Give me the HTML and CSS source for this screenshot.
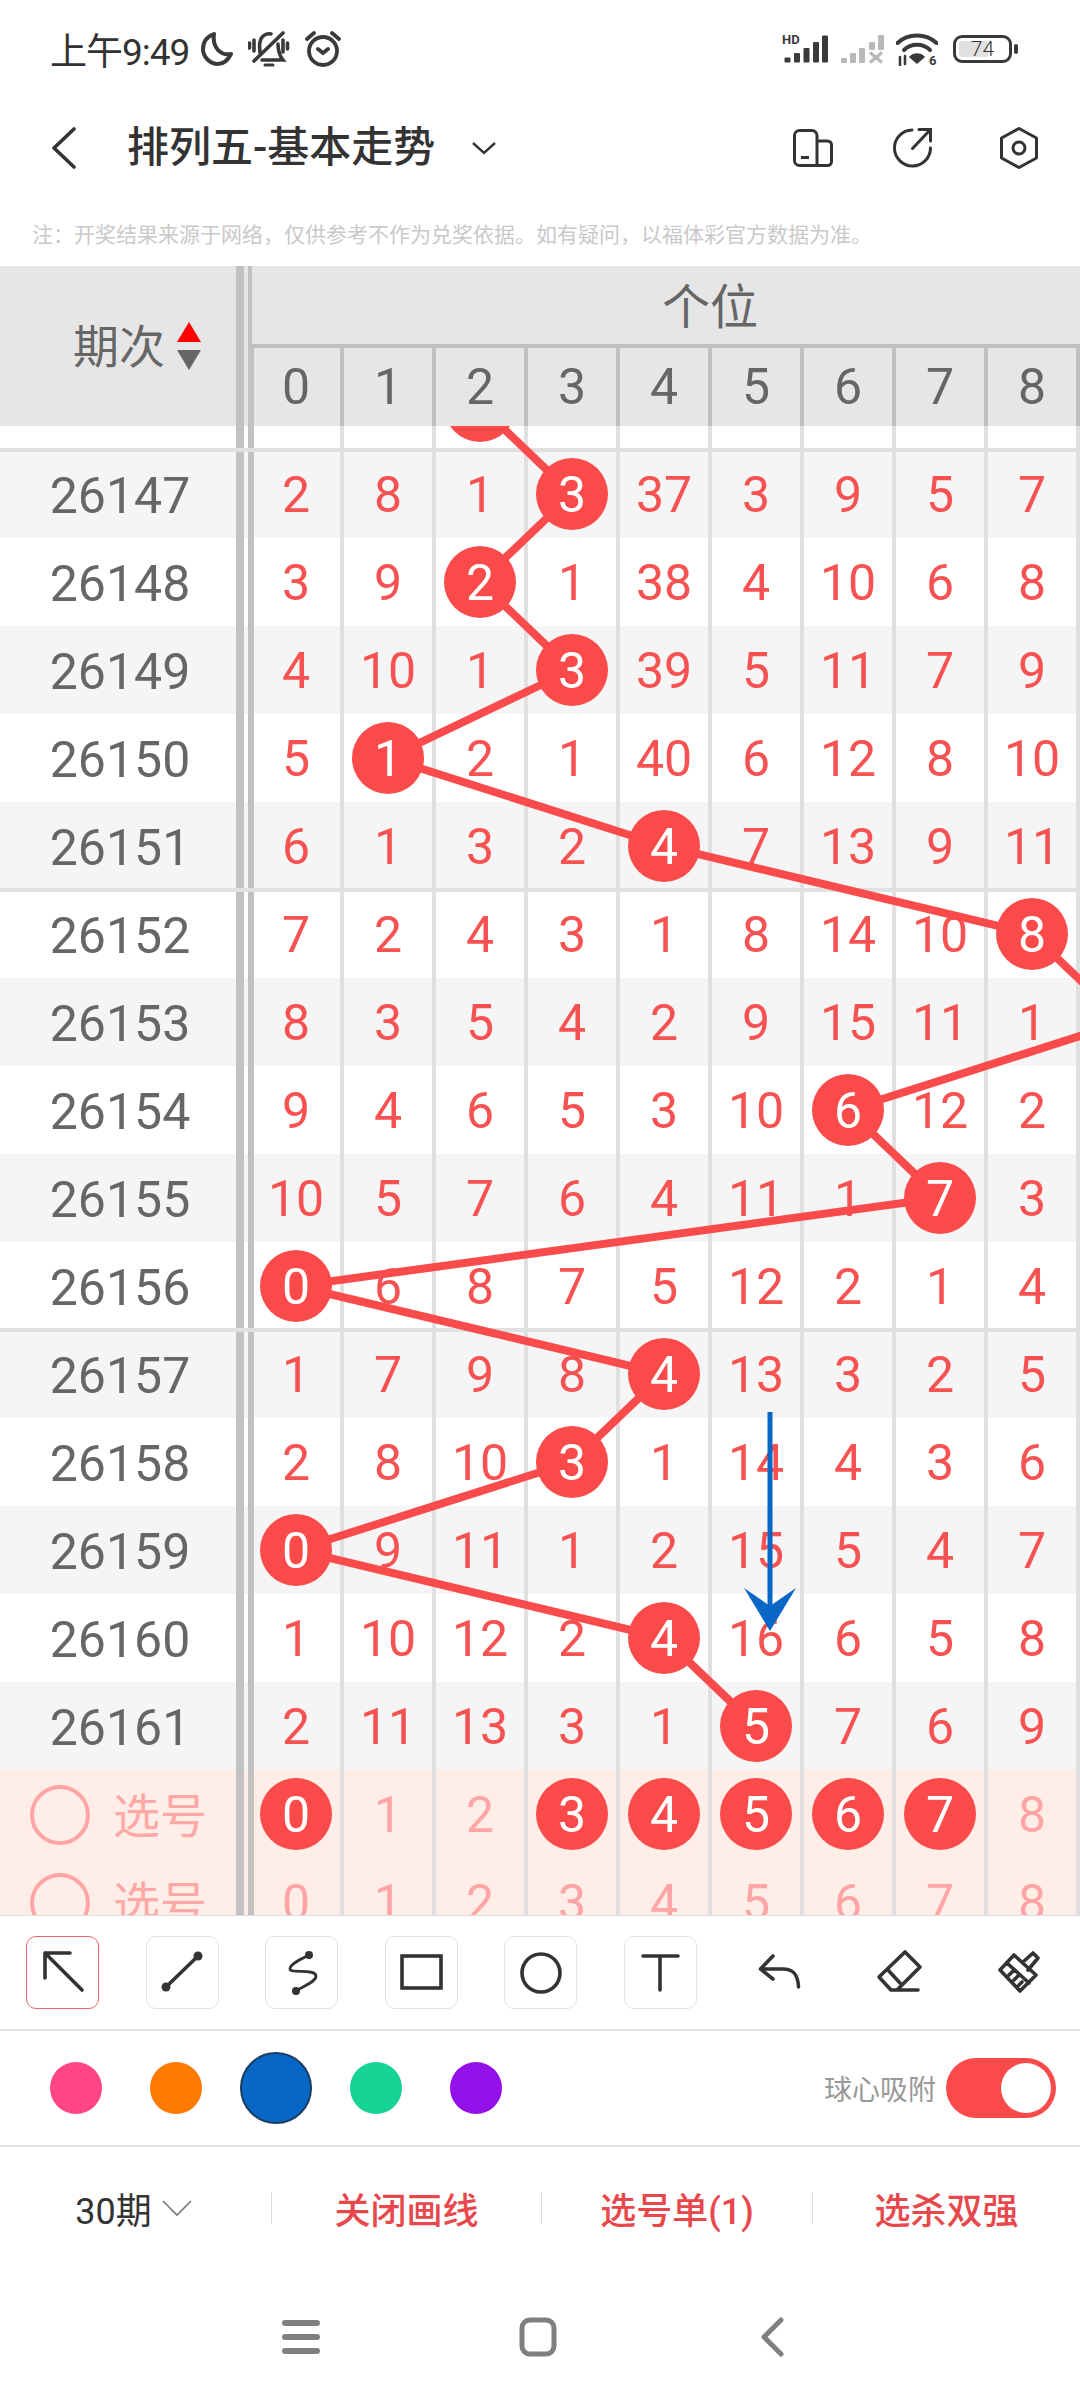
FILE: index.html
```html
<!DOCTYPE html>
<html lang="zh-CN">

<head>
    <meta charset="UTF-8">
    <meta name="viewport" content="width=device-width, initial-scale=1.0">
    <title>排列五-基本走势</title>
    <link rel="stylesheet" href="styles.css">
</head>

<body>
    <!-- 状态栏 -->
    <div class="status-bar">
        <div class="status-left">
            <span class="clock">上午9:49</span>
            <svg class="st-moon" width="32" height="34" viewBox="0 0 32 34"><path d="M13 2C5 5 2 11 2 17C2 25 9 32 17 32C23 32 27 28 30 22C20 24 11 16 13 2Z" fill="none" stroke="#3a3a3a" stroke-width="4" stroke-linejoin="round"/></svg>
            <svg class="st-bell" width="42" height="36" viewBox="0 0 42 36" fill="none" stroke="#3a3a3a" stroke-width="3.6" stroke-linecap="round"><path d="M12 22C12 18 11 14 12 11C13 5 18 2 23 3M30 13C30 19 31 24 35 29H14M6 30L35 2M1.5 12V17M6 9V20M35 9V21M39.5 12V18"/><path d="M17 34H25" stroke-width="3"/></svg>
            <svg class="st-alarm" width="38" height="36" viewBox="0 0 38 36" fill="none" stroke="#3a3a3a" stroke-width="3.8" stroke-linecap="round"><circle cx="18" cy="20" r="14"/><path d="M13 18L18 22L23 18M2 8L9 2M34 8L27 2"/></svg>
        </div>
        <div class="status-right">
            <svg width="46" height="30" viewBox="0 0 46 30"><text x="0" y="10" class="st-hd">HD</text><g fill="#3a3a3a"><rect x="2.5" y="23.5" width="6" height="5" rx="1"/><rect x="12" y="19" width="6" height="9.5" rx="1"/><rect x="21.5" y="14" width="6" height="14.5" rx="1"/><rect x="31" y="8" width="6" height="20.5" rx="1"/><rect x="40" y="1.5" width="6" height="27" rx="1"/></g></svg>
            <svg width="46" height="30" viewBox="0 0 46 30"><g fill="#b9b9b9"><rect x="2" y="24" width="6" height="5" rx="1"/><rect x="11" y="19" width="6" height="10" rx="1"/><rect x="20" y="14" width="6" height="15" rx="1"/><rect x="30" y="8" width="6" height="8" rx="1"/><rect x="39" y="1" width="6" height="15" rx="1"/></g><path d="M31 18.500L43 28.500M43 18.500L31 28.500" stroke="#b9b9b9" stroke-width="3.4" fill="none"/></svg>
            <svg width="42" height="34" viewBox="0 0 42 34" fill="none" stroke="#3a3a3a" stroke-linecap="round"><path d="M1.500 11C12 1 30 1 40.500 11" stroke-width="4"/><path d="M8 18C15 11 27 11 34 18" stroke-width="4"/><path d="M14 25C18 21 24 21 28 25L21 31Z" fill="#3a3a3a" stroke-width="1.500"/><path d="M4 25V33M9 24V32" stroke-width="2.600"/><text x="33" y="33" class="st-six">6</text></svg>
            <div class="battery">74</div>
            <div class="battery-cap"></div>
        </div>
    </div>

    <!-- 标题栏 -->
    <div class="title-bar">
        <svg class="back" width="26" height="42" viewBox="0 0 26 42"><path d="M23 2L3 21l20 19" fill="none" stroke="#333" stroke-width="3.6" stroke-linecap="round" stroke-linejoin="round"/></svg>
        <h1 class="title">排列五-基本走势</h1>
        <svg class="title-arrow" width="26" height="14" viewBox="0 0 26 14"><path d="M2 2l11 10L24 2" fill="none" stroke="#333" stroke-width="2.400"/></svg>
        <div class="title-tools">
            <svg width="40" height="38" viewBox="0 0 40 38" fill="none" stroke="#333" stroke-width="3"><path d="M6.500 1.500H19A5 5 0 0 1 24 6.500V36.500H6.500A5 5 0 0 1 1.500 31.500V6.500A5 5 0 0 1 6.500 1.500ZM24 12H34.500A4 4 0 0 1 38.500 16V32.500A4 4 0 0 1 34.500 36.500H24M8 28.500H16"/></svg>
            <svg width="40" height="40" viewBox="0 0 40 40" fill="none" stroke="#333" stroke-width="3" stroke-linecap="round"><path d="M19 2A18 18 0 1 0 37.500 20M19.500 20.500L37.500 1.500M26 1.500H37.500V13"/></svg>
            <svg width="38" height="42" viewBox="0 0 38 42" fill="none" stroke="#333" stroke-width="3" stroke-linejoin="round"><path d="M19 1.500L36.500 11V31L19 40.500L1.500 31V11Z"/><circle cx="19" cy="21" r="6"/></svg>
        </div>
    </div>

    <p class="note">注：开奖结果来源于网络，仅供参考不作为兑奖依据。如有疑问，以福体彩官方数据为准。</p>

    <!-- 走势表 -->
    <div class="chart">
        <div class="chart-head">
            <div class="head-period">
                <span>期次</span>
                <span class="sort"><i class="sort-up"></i><i class="sort-down"></i></span>
            </div>
            <div class="divider"></div>
            <div class="head-right">
                <div class="head-title">个位</div>
                <div class="head-nums">
                    <div class="hcell">0</div><div class="hcell">1</div><div class="hcell">2</div><div class="hcell">3</div><div class="hcell">4</div><div class="hcell">5</div><div class="hcell">6</div><div class="hcell">7</div><div class="hcell">8</div>
                </div>
            </div>
        </div>

        <div class="chart-body">
            <div class="rows">
                <div class="row"><div class="period">26146</div><div class="divider"></div><div class="cell">1</div><div class="cell">7</div><div class="cell"><b class="ball">2</b></div><div class="cell">2</div><div class="cell">36</div><div class="cell">2</div><div class="cell">8</div><div class="cell">4</div><div class="cell">6</div></div>
                <div class="row group"><div class="period">26147</div><div class="divider"></div><div class="cell">2</div><div class="cell">8</div><div class="cell">1</div><div class="cell"><b class="ball">3</b></div><div class="cell">37</div><div class="cell">3</div><div class="cell">9</div><div class="cell">5</div><div class="cell">7</div></div>
                <div class="row"><div class="period">26148</div><div class="divider"></div><div class="cell">3</div><div class="cell">9</div><div class="cell"><b class="ball">2</b></div><div class="cell">1</div><div class="cell">38</div><div class="cell">4</div><div class="cell">10</div><div class="cell">6</div><div class="cell">8</div></div>
                <div class="row"><div class="period">26149</div><div class="divider"></div><div class="cell">4</div><div class="cell">10</div><div class="cell">1</div><div class="cell"><b class="ball">3</b></div><div class="cell">39</div><div class="cell">5</div><div class="cell">11</div><div class="cell">7</div><div class="cell">9</div></div>
                <div class="row"><div class="period">26150</div><div class="divider"></div><div class="cell">5</div><div class="cell"><b class="ball">1</b></div><div class="cell">2</div><div class="cell">1</div><div class="cell">40</div><div class="cell">6</div><div class="cell">12</div><div class="cell">8</div><div class="cell">10</div></div>
                <div class="row"><div class="period">26151</div><div class="divider"></div><div class="cell">6</div><div class="cell">1</div><div class="cell">3</div><div class="cell">2</div><div class="cell"><b class="ball">4</b></div><div class="cell">7</div><div class="cell">13</div><div class="cell">9</div><div class="cell">11</div></div>
                <div class="row group"><div class="period">26152</div><div class="divider"></div><div class="cell">7</div><div class="cell">2</div><div class="cell">4</div><div class="cell">3</div><div class="cell">1</div><div class="cell">8</div><div class="cell">14</div><div class="cell">10</div><div class="cell"><b class="ball">8</b></div></div>
                <div class="row"><div class="period">26153</div><div class="divider"></div><div class="cell">8</div><div class="cell">3</div><div class="cell">5</div><div class="cell">4</div><div class="cell">2</div><div class="cell">9</div><div class="cell">15</div><div class="cell">11</div><div class="cell">1</div></div>
                <div class="row"><div class="period">26154</div><div class="divider"></div><div class="cell">9</div><div class="cell">4</div><div class="cell">6</div><div class="cell">5</div><div class="cell">3</div><div class="cell">10</div><div class="cell"><b class="ball">6</b></div><div class="cell">12</div><div class="cell">2</div></div>
                <div class="row"><div class="period">26155</div><div class="divider"></div><div class="cell">10</div><div class="cell">5</div><div class="cell">7</div><div class="cell">6</div><div class="cell">4</div><div class="cell">11</div><div class="cell">1</div><div class="cell"><b class="ball">7</b></div><div class="cell">3</div></div>
                <div class="row"><div class="period">26156</div><div class="divider"></div><div class="cell"><b class="ball">0</b></div><div class="cell">6</div><div class="cell">8</div><div class="cell">7</div><div class="cell">5</div><div class="cell">12</div><div class="cell">2</div><div class="cell">1</div><div class="cell">4</div></div>
                <div class="row group"><div class="period">26157</div><div class="divider"></div><div class="cell">1</div><div class="cell">7</div><div class="cell">9</div><div class="cell">8</div><div class="cell"><b class="ball">4</b></div><div class="cell">13</div><div class="cell">3</div><div class="cell">2</div><div class="cell">5</div></div>
                <div class="row"><div class="period">26158</div><div class="divider"></div><div class="cell">2</div><div class="cell">8</div><div class="cell">10</div><div class="cell"><b class="ball">3</b></div><div class="cell">1</div><div class="cell">14</div><div class="cell">4</div><div class="cell">3</div><div class="cell">6</div></div>
                <div class="row"><div class="period">26159</div><div class="divider"></div><div class="cell"><b class="ball">0</b></div><div class="cell">9</div><div class="cell">11</div><div class="cell">1</div><div class="cell">2</div><div class="cell">15</div><div class="cell">5</div><div class="cell">4</div><div class="cell">7</div></div>
                <div class="row"><div class="period">26160</div><div class="divider"></div><div class="cell">1</div><div class="cell">10</div><div class="cell">12</div><div class="cell">2</div><div class="cell"><b class="ball">4</b></div><div class="cell">16</div><div class="cell">6</div><div class="cell">5</div><div class="cell">8</div></div>
                <div class="row"><div class="period">26161</div><div class="divider"></div><div class="cell">2</div><div class="cell">11</div><div class="cell">13</div><div class="cell">3</div><div class="cell">1</div><div class="cell"><b class="ball">5</b></div><div class="cell">7</div><div class="cell">6</div><div class="cell">9</div></div>
                <!-- 选号行 -->
                <div class="row pick"><div class="period"><i class="pick-radio"></i><span>选号</span></div><div class="divider"></div><div class="cell"><b class="ball">0</b></div><div class="cell">1</div><div class="cell">2</div><div class="cell"><b class="ball">3</b></div><div class="cell"><b class="ball">4</b></div><div class="cell"><b class="ball">5</b></div><div class="cell"><b class="ball">6</b></div><div class="cell"><b class="ball">7</b></div><div class="cell">8</div></div>
                <div class="row pick"><div class="period"><i class="pick-radio"></i><span>选号</span></div><div class="divider"></div><div class="cell">0</div><div class="cell">1</div><div class="cell">2</div><div class="cell">3</div><div class="cell">4</div><div class="cell">5</div><div class="cell">6</div><div class="cell">7</div><div class="cell">8</div></div>
            </div>

            <!-- 走势连线，坐标对应每期的球心 -->
            <svg class="trend" width="1080" height="1489" viewBox="0 0 1080 1489">
                <polyline points="480,-20 572,68 480,156 572,244 388,332 664,420 1032,508 1124,596 848,684 940,772 296,860 664,948 572,1036 296,1124 664,1212 756,1300" fill="none" stroke="#f94b4b" stroke-width="8"/>
            </svg>
            <svg class="drawn" width="1080" height="1489" viewBox="0 0 1080 1489">
                <path d="M770 986V1190" stroke="#0766c6" stroke-width="5"/>
                <path d="M744 1162L770 1180L796 1162L770 1205Z" fill="#0766c6"/>
            </svg>
        </div>
    </div>

    <!-- 画线工具 -->
    <div class="tools">
        <div class="tool-btn active"><svg viewBox="0 0 73 73"><path d="M19 42V17H44M19 17L56 54"/></svg></div>
        <div class="tool-btn"><svg viewBox="0 0 73 73"><path d="M20 51L52 20"/><circle class="dot" cx="20" cy="51" r="4.500"/><circle class="dot" cx="52" cy="20" r="4.500"/></svg></div>
        <div class="tool-btn"><svg viewBox="0 0 73 73"><path class="thin" d="M44 19C36 23 25 28 25 33C25 38 51 32 51 40C51 46 38 50 31 55"/><circle class="dot" cx="44" cy="19" r="4"/><circle class="dot" cx="31" cy="55" r="4"/></svg></div>
        <div class="tool-btn"><svg viewBox="0 0 73 73"><rect x="17" y="20" width="39" height="32"/></svg></div>
        <div class="tool-btn"><svg viewBox="0 0 73 73"><circle cx="37" cy="37" r="19"/></svg></div>
        <div class="tool-btn"><svg viewBox="0 0 73 73"><path d="M19 20H54M36 20V54"/></svg></div>
        <div class="tool-plain"><svg viewBox="0 0 73 73"><path d="M30 20L17.500 33L30 43M18 33H40C50 33 55 38 55.500 51"/></svg></div>
        <div class="tool-plain"><svg viewBox="0 0 73 73"><path d="M42 16L57 31L34 54H28L16 41ZM25 34L37 47M28 54H55"/></svg></div>
        <div class="tool-plain"><svg viewBox="0 0 73 73"><path d="M32 19L18 34L38 55L54 39ZM25 27L47 47M41 26L51 17L56 22L46 34M27 39L32 34M32 44L36 40M37 49L40 46"/></svg></div>
    </div>

    <!-- 颜色和吸附开关 -->
    <div class="colors">
        <i class="swatch pink"></i>
        <i class="swatch orange"></i>
        <i class="swatch blue"></i>
        <i class="swatch green"></i>
        <i class="swatch purple"></i>
        <span class="snap-label">球心吸附</span>
        <div class="toggle"><i class="knob"></i></div>
    </div>

    <!-- 底部操作 -->
    <div class="actions">
        <div class="action count">30期<svg width="30" height="18" viewBox="0 0 30 18"><path d="M1 2l14 14L29 2" fill="none" stroke="#777" stroke-width="1.600"/></svg></div>
        <div class="action">关闭画线</div>
        <div class="action">选号单(1)</div>
        <div class="action">选杀双强</div>
    </div>

    <!-- 系统导航 -->
    <div class="sys-nav">
        <svg width="38" height="36" viewBox="0 0 38 36"><path d="M3 4H35M3 18H35M3 32H35" stroke="#808080" stroke-width="6" stroke-linecap="round"/></svg>
        <svg width="38" height="40" viewBox="0 0 38 40"><rect x="3" y="3" width="32" height="34" rx="8" fill="none" stroke="#808080" stroke-width="5"/></svg>
        <svg width="24" height="40" viewBox="0 0 24 40"><path d="M21 3L4 20L21 37" fill="none" stroke="#808080" stroke-width="5" stroke-linecap="round" stroke-linejoin="round"/></svg>
    </div>
</body>

</html>
```

FILE: styles.css
```css
* {
    box-sizing: border-box;
}

body {
    margin: 0;
    width: 1080px;
    height: 2400px;
    overflow: hidden;
    background-color: #fff;
    font-family: Roboto, "Noto Sans CJK SC", sans-serif;
    color: #333;
}

/* 状态栏 */
.status-bar {
    height: 96px;
    padding: 2px 62px 0 50px;
    display: flex;
    justify-content: space-between;
    align-items: center;
}

.status-left,
.status-right {
    display: flex;
    align-items: center;
}

.clock {
    font-size: 37px;
    letter-spacing: -1px;
    margin-right: 12px;
}

.st-bell {
    margin: 0 15px 0 15px;
}

.status-right svg {
    margin-right: 11px;
}

.status-right svg:nth-child(3) {
    margin-right: 15px;
}

.st-hd {
    font-size: 13px;
    font-weight: 700;
    fill: #3a3a3a;
}

.st-six {
    font-size: 13px;
    font-weight: 700;
    fill: #3a3a3a;
    stroke: none;
}

.battery {
    width: 59px;
    height: 28px;
    padding: 3px;
    border: 3px solid #3a3a3a;
    border-radius: 9px;
    background: linear-gradient(#e0e0e0, #e0e0e0) no-repeat;
    background-clip: content-box;
    background-size: 62% 100%;
    background-origin: content-box;
    font-size: 21px;
    font-weight: 300;
    line-height: 16px;
    text-align: center;
}

.battery-cap {
    width: 4px;
    height: 10px;
    margin-left: 2px;
    background-color: #3a3a3a;
    border-radius: 2px;
}

/* 标题栏 */
.title-bar {
    height: 104px;
    padding: 0 42px 0 51px;
    display: flex;
    align-items: center;
}

.title {
    margin: 0 0 0 50px;
    font-size: 42px;
    font-weight: 500;
    line-height: 1;
}

.title-arrow {
    margin: 0 0 0 36px;
}

.title-tools {
    margin-left: auto;
    display: flex;
    align-items: center;
    gap: 60px;
}

.title-tools svg:last-child {
    margin-left: 7px;
}

.note {
    margin: 0;
    height: 66px;
    padding: 18px 0 0 32px;
    font-size: 21px;
    line-height: 34px;
    color: #c9c9c9;
    white-space: nowrap;
}

/* 表头 */
.chart {
    height: 1649px;
}

.chart-head {
    height: 160px;
    display: flex;
    background-color: #e6e6e6;
    color: #666;
}

.head-period {
    width: 236px;
    padding: 0 0 6px 73px;
    display: flex;
    align-items: center;
    gap: 12px;
    font-size: 46px;
}

.sort {
    display: flex;
    flex-direction: column;
    gap: 8px;
    padding-top: 6px;
}

.sort-up {
    border-left: 12px solid transparent;
    border-right: 12px solid transparent;
    border-bottom: 20px solid #f00;
}

.sort-down {
    border-left: 12px solid transparent;
    border-right: 12px solid transparent;
    border-top: 20px solid #666;
}

.divider {
    flex: none;
    width: 16px;
    border-left: 8px solid #c2c2c2;
    border-right: 4px solid #c2c2c2;
}

.head-right {
    flex: 1;
}

.head-title {
    height: 82px;
    padding-left: 88px;
    border-bottom: 4px solid #bfbfbf;
    text-align: center;
    font-size: 48px;
    line-height: 84px;
}

.head-nums {
    height: 78px;
    display: flex;
}

.hcell {
    width: 92px;
    border-right: 4px solid #bfbfbf;
    text-align: center;
    font-size: 50px;
    line-height: 78px;
}

.hcell:first-child {
    box-shadow: inset 2px 0 #c2c2c2;
}

/* 表身 */
.chart-body {
    position: relative;
    height: 1489px;
    overflow: hidden;
}

.rows {
    margin-top: -64px;
}

.row {
    position: relative;
    height: 88px;
    display: flex;
    background-color: #fff;
    font-size: 50px;
    line-height: 88px;
    color: #f65252;
}

.row:nth-child(even) {
    background-color: #f5f5f5;
}

.row.group::before {
    content: "";
    position: absolute;
    top: -2px;
    left: 0;
    right: 0;
    height: 4px;
    background-color: #e0e0e0;
}

.period {
    width: 236px;
    padding: 2px 0 0 4px;
    text-align: center;
    color: #666;
}

.cell {
    width: 92px;
    padding-top: 2px;
    border-right: 4px solid #e0e0e0;
    display: flex;
    justify-content: center;
    align-items: center;
}

.divider + .cell {
    box-shadow: inset 2px 0 #c2c2c2;
}

.ball {
    position: relative;
    z-index: 2;
    flex: none;
    width: 72px;
    height: 72px;
    margin-top: -2px;
    border-radius: 50%;
    background-color: #fa4a4a;
    color: #fff;
    font-weight: 400;
    line-height: 74px;
    text-align: center;
}

.row.pick {
    background-color: #ffeee8;
    color: #ffa5a5;
}

.pick .period {
    padding: 0 0 0 30px;
    display: flex;
    align-items: center;
    gap: 23px;
    font-size: 47px;
    color: #ffa8a8;
}

.pick .period span {
    padding-top: 6px;
}

.pick-radio {
    flex: none;
    width: 60px;
    height: 60px;
    margin-top: 2px;
    border: 4px solid #ffa5a5;
    border-radius: 50%;
}

.trend,
.drawn {
    position: absolute;
    top: 0;
    left: 0;
    pointer-events: none;
}

.trend {
    z-index: 1;
}

.drawn {
    z-index: 3;
}

/* 画线工具 */
.tools {
    height: 116px;
    padding: 20px 0 0 26px;
    display: flex;
    gap: 46.5px;
    border-top: 1px solid #ddd;
    border-bottom: 2px solid #e2e2e2;
}

.tool-btn,
.tool-plain {
    flex: none;
    width: 73px;
    height: 73px;
}

.tool-btn {
    border: 1px solid #e2e2e2;
    border-radius: 10px;
}

.tool-btn.active {
    border-color: #e8666a;
}

.tools svg {
    display: block;
    width: 73px;
    height: 73px;
    margin: -1px;
    fill: none;
    stroke: #333;
    stroke-width: 3.6;
    stroke-linecap: round;
    stroke-linejoin: round;
}

.tool-plain svg {
    margin: 0;
}

.tools .thin {
    stroke-width: 2.8;
}

.tools rect {
    stroke-linejoin: miter;
}

.tools .dot {
    fill: #333;
    stroke: none;
}

/* 颜色 */
.colors {
    height: 116px;
    padding: 0 24px 0 50px;
    display: flex;
    align-items: center;
    border-bottom: 2px solid #e2e2e2;
}

.swatch {
    flex: none;
    width: 52px;
    height: 52px;
    margin-right: 48px;
    border-radius: 50%;
}

.pink {
    background-color: #ff4586;
}

.orange {
    background-color: #ff7a00;
}

.blue {
    width: 72px;
    height: 72px;
    margin: 0 38px 0 -10px;
    background-color: #0766c6;
    border: 2px solid #1c3c60;
}

.green {
    background-color: #16d493;
}

.purple {
    background-color: #9410e8;
}

.snap-label {
    margin-left: auto;
    margin-right: 10px;
    font-size: 28px;
    color: #999;
}

.toggle {
    width: 110px;
    height: 60px;
    padding: 5px;
    display: flex;
    justify-content: flex-end;
    background-color: #fa4a4a;
    border-radius: 30px;
}

.knob {
    width: 50px;
    height: 50px;
    background-color: #fff;
    border-radius: 50%;
}

/* 底部操作 */
.actions {
    height: 122px;
    display: grid;
    grid-template-columns: 271px 270px 271px 268px;
    align-items: center;
}

.action {
    height: 32px;
    display: flex;
    justify-content: center;
    align-items: center;
    border-left: 1px solid #ddd;
    font-size: 36px;
    font-weight: 500;
    color: #e8474c;
}

.action.count {
    gap: 10px;
    padding-right: 4px;
    border-left: none;
    font-size: 36px;
    font-weight: 400;
    color: #333;
}

/* 系统导航 */
.sys-nav {
    height: 130px;
    padding: 6px 0 0 282px;
    display: flex;
    align-items: center;
    gap: 199px;
}

.sys-nav svg:last-child {
    margin-left: 4px;
}
```
